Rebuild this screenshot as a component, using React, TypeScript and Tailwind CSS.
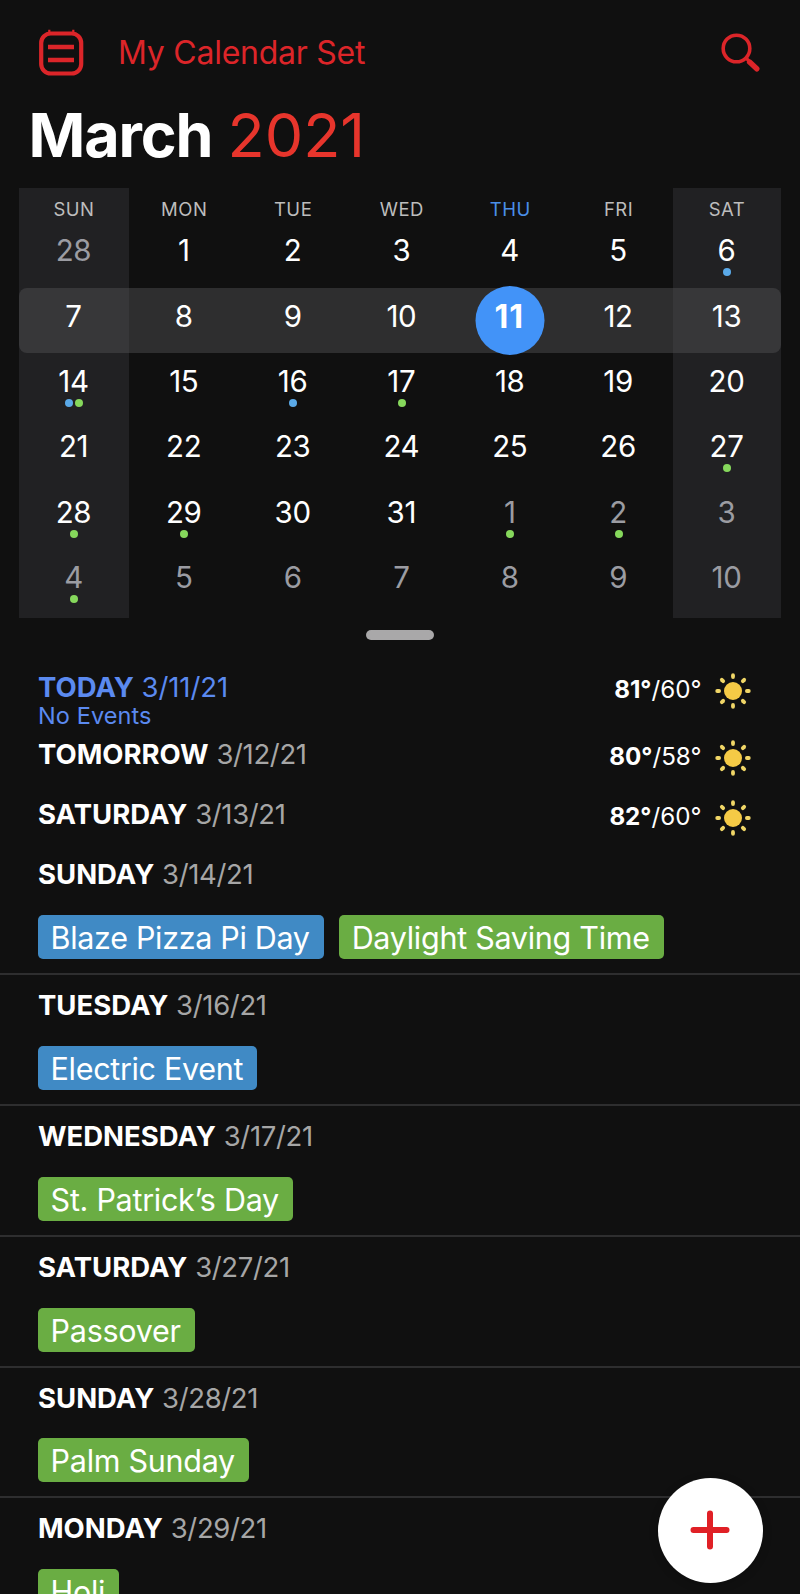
import React from "react";

type Dot = "blue" | "green";

interface Day {
  n: number;
  muted?: boolean;
  today?: boolean;
  dots?: Dot[];
}

interface Column {
  label: string;
  days: Day[];
  className?: string;
}

const COLUMNS: Column[] = [
  {
    label: "SUN",
    className: "bg-[#212123]",
    days: [
      { n: 28, muted: true },
      { n: 7 },
      { n: 14, dots: ["blue", "green"] },
      { n: 21 },
      { n: 28, dots: ["green"] },
      { n: 4, muted: true, dots: ["green"] },
    ],
  },
  {
    label: "MON",
    className: "pl-[1.6px]",
    days: [
      { n: 1 },
      { n: 8 },
      { n: 15 },
      { n: 22 },
      { n: 29, dots: ["green"] },
      { n: 5, muted: true },
    ],
  },
  {
    label: "TUE",
    className: "pl-[1.8px]",
    days: [
      { n: 2 },
      { n: 9 },
      { n: 16, dots: ["blue"] },
      { n: 23 },
      { n: 30 },
      { n: 6, muted: true },
    ],
  },
  {
    label: "WED",
    className: "pl-[1.6px]",
    days: [
      { n: 3 },
      { n: 10 },
      { n: 17, dots: ["green"] },
      { n: 24 },
      { n: 31 },
      { n: 7, muted: true },
    ],
  },
  {
    label: "THU",
    className: "pl-[0.8px]",
    days: [
      { n: 4 },
      { n: 11, today: true },
      { n: 18 },
      { n: 25 },
      { n: 1, muted: true, dots: ["green"] },
      { n: 8, muted: true },
    ],
  },
  {
    label: "FRI",
    days: [
      { n: 5 },
      { n: 12 },
      { n: 19 },
      { n: 26 },
      { n: 2, muted: true, dots: ["green"] },
      { n: 9, muted: true },
    ],
  },
  {
    label: "SAT",
    className: "bg-[#212123]",
    days: [
      { n: 6, dots: ["blue"] },
      { n: 13 },
      { n: 20 },
      { n: 27, dots: ["green"] },
      { n: 3, muted: true },
      { n: 10, muted: true },
    ],
  },
];

const AGENDA: { day: string; date: string; events: [string, Dot][] }[] = [
  {
    day: "SUNDAY",
    date: "3/14/21",
    events: [
      ["Blaze Pizza Pi Day", "blue"],
      ["Daylight Saving Time", "green"],
    ],
  },
  { day: "TUESDAY", date: "3/16/21", events: [["Electric Event", "blue"]] },
  { day: "WEDNESDAY", date: "3/17/21", events: [["St. Patrick’s Day", "green"]] },
  { day: "SATURDAY", date: "3/27/21", events: [["Passover", "green"]] },
  { day: "SUNDAY", date: "3/28/21", events: [["Palm Sunday", "green"]] },
  { day: "MONDAY", date: "3/29/21", events: [["Holi", "green"]] },
];

const CalendarSetIcon = () => (
  <svg width="46" height="48" viewBox="0 0 46 48" fill="none" stroke="#dc2529">
    <rect x="3.2" y="4.5" width="40" height="40" rx="9.5" strokeWidth="4.2" />
    <path d="M11.3 0.7v3M35.3 0.7v3" strokeWidth="2.2" />
    <path d="M10 18h26M10 31h26" strokeWidth="4.6" />
  </svg>
);

const SearchIcon = () => (
  <svg width="40" height="40" viewBox="0 0 40 40" fill="none" stroke="#dc2529">
    <circle cx="15.5" cy="15.5" r="13.3" strokeWidth="3.6" />
    <path d="M25 25l3 3" strokeWidth="3.2" />
    <path d="M28.6 29l7.2 6.8" strokeWidth="5.4" strokeLinecap="round" />
  </svg>
);

const SunIcon = () => (
  <svg width="36" height="36" viewBox="-18 -18 36 36" fill="none">
    <circle r="9" fill="#f5ca46" />
    {[0, 45, 90, 135, 180, 225, 270, 315].map((a) => (
      <path
        key={a}
        d="M0 -15.8V-13.9"
        transform={`rotate(${a})`}
        stroke="#f0d667"
        strokeWidth="3.8"
        strokeLinecap="round"
      />
    ))}
  </svg>
);

const DayCell = ({ n, muted, today, dots = [] }: Day) => (
  <div className="relative flex h-[65.3px] flex-col items-center pt-[10px]">
    {today && (
      <div className="absolute left-1/2 top-[-2px] size-[69px] -translate-x-1/2 rounded-full bg-[#4293f8]" />
    )}
    <span
      className={
        today
          ? "relative pr-[2px] text-[32px] font-bold leading-[38px] tracking-[0.8px] text-white"
          : muted
            ? "relative pr-[1px] text-[29.5px] leading-[36px] tracking-[-0.4px] text-[#9b9ca2]"
            : "relative pr-[1px] text-[29.5px] leading-[36px] tracking-[-0.4px] text-white"
      }
    >
      {n}
    </span>
    {dots.length > 0 && (
      <div className="absolute top-[46px] flex gap-[2px]">
        {dots.map((d) => (
          <i
            key={d}
            className={
              d === "blue"
                ? "size-2 rounded-full bg-[#5aa9e8]"
                : "size-2 rounded-full bg-[#86d85c]"
            }
          />
        ))}
      </div>
    )}
  </div>
);

const DayTitle = ({
  day,
  date,
  today,
}: {
  day: string;
  date: string;
  today?: boolean;
}) => (
  <h2
    className={
      today
        ? "whitespace-nowrap text-[27.5px] leading-[30px] text-[#5b8af0]"
        : "whitespace-nowrap text-[27.5px] leading-[30px] text-[#a6a6a6]"
    }
  >
    <b className={today ? "font-bold" : "font-bold text-white"}>{day}</b>{" "}
    <span className={today ? "tracking-[-0.1px]" : "tracking-[-0.35px]"}>
      {date}
    </span>
  </h2>
);

const Weather = ({ high, low }: { high: number; low: number }) => (
  <div className="flex h-9 items-center gap-[13px] text-[24.2px] text-white">
    <span className="mb-px leading-[30px]">
      <b>{high}°</b>/{low}°
    </span>
    <span className="mt-[2px]">
      <SunIcon />
    </span>
  </div>
);

export default function App() {
  return (
    <div
      className="relative h-[1594px] w-[800px] overflow-hidden bg-[#101010]"
      style={{ fontFamily: 'Inter, "Liberation Sans", sans-serif' }}
    >
      <header className="flex h-[105px] items-center pl-[38px] pr-[39px]">
        <CalendarSetIcon />
        <span className="ml-[34px] text-[32px] leading-[40px] tracking-[-0.25px] text-[#dc2529]">
          My Calendar Set
        </span>
        <span className="ml-auto">
          <SearchIcon />
        </span>
      </header>

      <h1 className="flex h-[83px] gap-[15px] whitespace-nowrap pl-[28.5px] text-[61px] leading-[61px] text-[#e7352c]">
        <b className="font-bold tracking-[-1.1px] text-white">March</b>
        <span>2021</span>
      </h1>

      {/* Month grid */}
      <section className="relative ml-[19px] grid h-[430px] w-[762px] grid-cols-[110px_repeat(5,1fr)_108px]">
        <div className="absolute left-0 top-[100px] h-[65px] w-full rounded-[8px] bg-[#505052]/47" />
        {COLUMNS.map(({ label, days, className }) => (
          <div key={label} className={className}>
            <div
              className={
                label === "THU"
                  ? "h-[34.4px] pt-[10px] text-center text-[18.5px] leading-[23px] tracking-[0.5px] text-[#4a8fe8]"
                  : "h-[34.4px] pt-[10px] text-center text-[18.5px] leading-[23px] tracking-[0.5px] text-[#bdbdbd]"
              }
            >
              {label}
            </div>
            {days.map((d, i) => (
              <DayCell key={i} {...d} />
            ))}
          </div>
        ))}
      </section>

      <div className="mx-auto mt-[11.5px] h-[10px] w-[68px] rounded-full bg-[#a9a8a9]" />

      {/* Upcoming days */}
      <section className="pl-[38px] pr-[49.5px] pt-[32.5px]">
        <div className="flex h-[67px] justify-between">
          <div>
            <DayTitle day="TODAY" date="3/11/21" today />
            <p className="text-[23.5px] leading-[27px] tracking-[0.1px] text-[#5b8af0]">
              No Events
            </p>
          </div>
          <Weather high={81} low={60} />
        </div>
        <div className="flex h-[60px] justify-between">
          <DayTitle day="TOMORROW" date="3/12/21" />
          <Weather high={80} low={58} />
        </div>
        <div className="flex h-[60px] justify-between">
          <DayTitle day="SATURDAY" date="3/13/21" />
          <Weather high={82} low={60} />
        </div>
      </section>

      {AGENDA.map(({ day, date, events }, i) => (
        <section
          key={date}
          className={
            i === 0
              ? "border-b-2 border-[#2e2e2f] pb-[14px] pl-[38px]"
              : "border-b-2 border-[#2e2e2f] pb-[14px] pl-[38px] pt-[15px]"
          }
        >
          <DayTitle day={day} date={date} />
          <div className="-ml-[0.4px] mt-[25.9px] flex gap-[15px]">
            {events.map(([name, color]) => (
              <span
                key={name}
                className={
                  color === "blue"
                    ? "h-[44px] whitespace-nowrap rounded-[5px] bg-[#408ac5] pl-[13px] pr-[14px] text-[30.5px] leading-[46px] tracking-[-0.32px] text-white"
                    : "h-[44px] whitespace-nowrap rounded-[5px] bg-[#6aad43] pl-[13px] pr-[14px] text-[30.5px] leading-[46px] tracking-[-0.28px] text-white"
                }
              >
                {name}
              </span>
            ))}
          </div>
        </section>
      ))}

      <button className="absolute left-[657.5px] top-[1477.5px] flex size-[105px] items-center justify-center rounded-full bg-white shadow-[0_2px_10px_rgba(0,0,0,0.2)]">
        <svg width="40" height="40" viewBox="0 0 40 40">
          <path
            d="M20 3.5v33M3.5 20h33"
            stroke="#e02026"
            strokeWidth="6"
            strokeLinecap="round"
          />
        </svg>
      </button>
    </div>
  );
}
